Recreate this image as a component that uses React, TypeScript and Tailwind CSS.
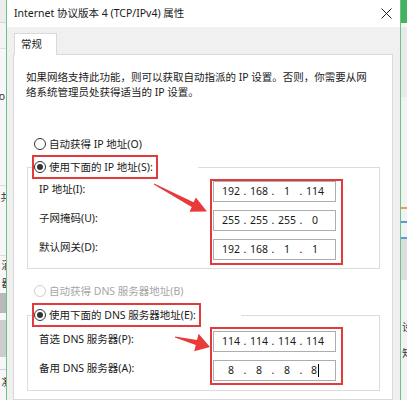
import React from "react";

const RED = "border-[#e23b3b]";

function Radio({ checked = false, disabled = false }: { checked?: boolean; disabled?: boolean }) {
  return (
    <span
      className={`flex h-[12px] w-[12px] shrink-0 items-center justify-center rounded-full border bg-white ${
        disabled ? "border-[#cfcfcf]" : "border-[#333333]"
      }`}
    >
      {checked && <span className="h-[6px] w-[6px] rounded-full bg-[#333333]" />}
    </span>
  );
}

function IpField({ parts, cursor = false }: { parts: string[]; cursor?: boolean }) {
  return (
    <div className="flex h-[21px] w-[123px] items-center border border-[#adadad] bg-white pl-[6px] text-[10.5px] text-[#1a1a1a]">
      {parts.map((p, i) => (
        <React.Fragment key={i}>
          {i > 0 && <span className="w-[6px] text-center">.</span>}
          <span className="flex w-[22px] items-center justify-center">
            {p}
            {cursor && i === parts.length - 1 && <span className="ml-[1px] h-[13px] w-px bg-black" />}
          </span>
        </React.Fragment>
      ))}
    </div>
  );
}

function Group({
  legend,
  rows,
  boxPad,
  bottomPad,
}: {
  legend: string;
  rows: { label: string; parts: string[]; cursor?: boolean }[];
  boxPad: string;
  bottomPad: string;
}) {
  return (
    <fieldset className={`ml-[13px] w-[353px] border border-[#dcdcdc] px-0 ${bottomPad}`}>
      <legend className="ml-[4px] pr-[40px]">
        <span className={`flex h-[24px] items-center gap-[3px] border-2 ${RED} pr-[3px]`}>
          <Radio checked />
          <span>{legend}</span>
        </span>
      </legend>
      <div className="flex items-start pl-[11px]">
        <div className={`flex w-[171px] flex-col gap-[8px] ${boxPad}`}>
          {rows.map((r) => (
            <div key={r.label} className="flex h-[21px] items-center">
              {r.label}
            </div>
          ))}
        </div>
        <div className={`flex flex-col gap-[8px] border-2 ${RED} pl-px pr-[5px] ${boxPad}`}>
          {rows.map((r) => (
            <IpField key={r.label} parts={r.parts} cursor={r.cursor} />
          ))}
        </div>
      </div>
    </fieldset>
  );
}

// 对话框后面露出的窗口边缘
function LeftStrip() {
  return (
    <div className="flex w-[6px] shrink-0 flex-col overflow-hidden bg-[#f7f7f7] text-[10.5px] text-[#333]">
      <div className="h-[22px] bg-[#ededed]" />
      <div className="h-[26px] border-t border-[#d6d6d6] bg-[#f4f4f4]" />
      <div className="h-[38px] border-t border-[#e0e0e0]" />
      <div className="flex h-[20px] items-center justify-end">
        <span className="mr-[1px] shrink-0">o</span>
      </div>
      <div className="h-[80px] border-b border-[#dcdcdc]" />
      <div className="flex h-[22px] items-center justify-end">
        <span className="-mr-[5px] shrink-0">共</span>
      </div>
      <div className="h-[48px] border-b border-[#dedede]" />
      <div className="flex h-[18px] items-center justify-end">
        <span className="-mr-[6px] shrink-0">酒</span>
      </div>
      <div className="flex h-[18px] items-center justify-end">
        <span className="-mr-[6px] shrink-0">器</span>
      </div>
      <div className="h-px" />
      <div className="h-[20px] bg-[#b9b9b9]" />
      <div className="h-[7px]" />
      <div className="h-[37px] bg-[#cdcdcd]" />
      <div className="h-[13px] border-b border-[#d0d0d0]" />
      <div className="flex h-[24px] items-center justify-end">
        <span className="-mr-[6px] shrink-0">凝</span>
      </div>
    </div>
  );
}

function RightStrip() {
  return (
    <div className="flex w-[6px] shrink-0 flex-col overflow-hidden bg-[#f2f2f2] text-[10.5px] text-[#333]">
      <div className="h-[23px] bg-[#43b35f]" />
      <div className="h-[4px] bg-[#f5f5f5]" />
      <div className="h-[70px] bg-[#e9e9e9]" />
      <div className="h-[110px]" />
      <div className="h-[2px] bg-[#e7a04a]" />
      <div className="h-[12px]" />
      <div className="h-[2px] bg-[#5b9bd5]" />
      <div className="h-[14px]" />
      <div className="h-[2px] bg-[#5b9bd5]" />
      <div className="h-[41px] bg-[#dddddd]" />
      <div className="h-[34px]" />
      <div className="flex h-[26px] items-center">
        <span className="ml-[1px] shrink-0">设</span>
      </div>
      <div className="flex h-[26px] items-center">
        <span className="ml-[1px] shrink-0">知</span>
      </div>
    </div>
  );
}

export default function App() {
  return (
    <div className="relative flex h-[400px] w-[407px] overflow-hidden bg-[#f0f0f0] font-['Noto_Sans','Noto_Sans_CJK_SC',sans-serif] text-[10.5px] leading-[15px] text-[#1a1a1a]">
      <LeftStrip />

      <div className="flex w-[395px] shrink-0 flex-col border-x border-[#6dbf8b] bg-[#f0f0f0]">
        <div className="flex h-[27px] shrink-0 items-center justify-between bg-white pl-[7px] pr-[8px]">
          <span>Internet 协议版本 4 (TCP/IPv4) 属性</span>
          <svg width="11" height="11" viewBox="0 0 11 11" className="text-[#222]">
            <path d="M0.5 0.5 L10.5 10.5 M10.5 0.5 L0.5 10.5" stroke="currentColor" strokeWidth="1" />
          </svg>
        </div>

        <div className="flex flex-1 flex-col pl-[6px] pr-[7px] pt-[6px]">
          <div className="relative z-10 -mb-px ml-px flex h-[22px] w-[43px] items-center border-x border-t border-[#d9d9d9] bg-white pl-[6px]">
            常规
          </div>
          <div className="flex flex-1 flex-col border border-[#d9d9d9] bg-white">
            <p className="pl-[12px] pt-[15px]">
              如果网络支持此功能，则可以获取自动指派的 IP 设置。否则，你需要从网
              <br />
              络系统管理员处获得适当的 IP 设置。
            </p>

            <div className="ml-[20px] mt-[36px] flex h-[16px] items-center gap-[3px]">
              <Radio />
              <span>自动获得 IP 地址(O)</span>
            </div>

            <div className="mt-[3px]">
              <Group
                legend="使用下面的 IP 地址(S):"
                boxPad="pb-[3px]"
                bottomPad="pb-[3px]"
                rows={[
                  { label: "IP 地址(I):", parts: ["192", "168", "1", "114"] },
                  { label: "子网掩码(U):", parts: ["255", "255", "255", "0"] },
                  { label: "默认网关(D):", parts: ["192", "168", "1", "1"] },
                ]}
              />
            </div>

            <div className="ml-[20px] mt-[14px] flex h-[16px] items-center gap-[3px] text-[#a6a6a6]">
              <Radio disabled />
              <span>自动获得 DNS 服务器地址(B)</span>
            </div>

            <div className="mt-[4px]">
              <Group
                legend="使用下面的 DNS 服务器地址(E):"
                boxPad="py-[2px]"
                bottomPad="pb-[5px]"
                rows={[
                  { label: "首选 DNS 服务器(P):", parts: ["114", "114", "114", "114"] },
                  { label: "备用 DNS 服务器(A):", parts: ["8", "8", "8", "8"], cursor: true },
                ]}
              />
            </div>
          </div>
        </div>
      </div>

      <RightStrip />

      {/* 标注箭头 */}
      <svg className="pointer-events-none absolute left-0 top-0" width="407" height="400" viewBox="0 0 407 400">
        <polygon
          points="154.2,183.4 193.6,202.2 195.9,197.4 207,211.5 189.6,211.7 191.7,207.0 153.8,184.6"
          fill="#e8393b"
        />
        <polygon
          points="175.1,336.4 197.0,340.1 198.6,333.8 210,347 194.2,351.2 195.8,344.9 174.9,337.6"
          fill="#e8393b"
        />
      </svg>
    </div>
  );
}
